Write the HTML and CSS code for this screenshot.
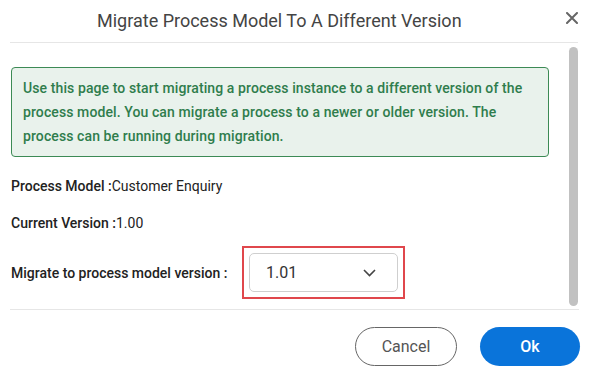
FILE: index.html
```html
<!DOCTYPE html>
<html lang="en">
<head>
  <meta charset="utf-8" />
  <meta name="viewport" content="width=device-width, initial-scale=1.0" />
  <title>Migrate Process Model</title>
  <link rel="stylesheet" href="styles.css">
</head>
<body>
  <div class="dialog">
    <div class="header">
      <h1>Migrate Process Model To A Different Version</h1>
      <span class="close">
        <svg width="12" height="12" viewBox="0 0 12 12"><path d="M1 1 L11 11 M11 1 L1 11" stroke="#666" stroke-width="2" stroke-linecap="round"/></svg>
      </span>
    </div>

    <div class="main">
      <div class="content">
        <div class="notice">
          Use this page to start migrating a process instance to a different version of the<br>
          process model. You can migrate a process to a newer or older version. The<br>
          process can be running during migration.
        </div>

        <div class="field first"><b>Process Model :</b>Customer Enquiry</div>
        <div class="field"><b>Current Version :</b>1.00</div>

        <div class="migrate-row">
          <b>Migrate to process model version :</b>
          <div class="highlight">
            <div class="select">
              <span>1.01</span>
              <svg width="13" height="8" viewBox="0 0 13 8"><path d="M1 1 L6.5 6.5 L12 1" fill="none" stroke="#444" stroke-width="1.6"/></svg>
            </div>
          </div>
        </div>
      </div>
      <div class="scrollbar"></div>
    </div>

    <div class="footer">
      <a href="#" class="btn cancel">Cancel</a>
      <a href="#" class="btn ok">Ok</a>
    </div>
  </div>
</body>
</html>
```

FILE: styles.css
```css
body {
  margin: 0;
  background: #fff;
  font-family: Roboto, 'Liberation Sans', sans-serif;
  color: #222;
}

.dialog {
  width: 591px;
  height: 378px;
}

.header {
  height: 42px;
  margin: 0 13px 0 10px;
  border-bottom: 1px solid #e6e6e6;
  display: flex;
  align-items: center;
}

.header h1 {
  flex: 1;
  margin: 0 0 1px 0;
  padding-left: 87px;
  font-size: 18px;
  font-weight: 400;
  color: #444;
}

.close {
  display: flex;
  margin: 0 0 6px 0;
}

.main {
  display: flex;
  height: 266px;
}

.content {
  width: 538px;
  padding-left: 11px;
}

.notice {
  margin-top: 24px;
  height: 72px;
  padding: 8px 11px;
  border: 1px solid #3c8a55;
  border-radius: 4px;
  background: #e9f2ec;
  color: #2f7d4c;
  font-size: 14px;
  font-weight: 500;
  line-height: 24px;
  letter-spacing: 0.1px;
  white-space: nowrap;
}

.field {
  font-size: 14px;
  line-height: 20px;
  margin-top: 17px;
}

.field.first {
  margin-top: 19px;
}

.field b,
.migrate-row b {
  font-weight: 500;
}

.migrate-row {
  display: flex;
  align-items: center;
  margin-top: 13px;
  font-size: 14px;
}

.migrate-row b {
  width: 231px;
}

.highlight {
  border: 2px solid #e0474c;
  padding: 5px;
}

.select {
  height: 37px;
  border: 1px solid #cfcfcf;
  border-radius: 5px;
  display: flex;
  align-items: center;
  justify-content: space-between;
  padding: 0 21px 0 16px;
  box-sizing: content-box;
  width: 110px;
  font-size: 16px;
  color: #333;
}

.scrollbar {
  width: 9px;
  margin: 4px 0 3px 20px;
  border-radius: 5px;
  background: #c1c1c1;
}

.footer {
  margin: 0 12px 0 10px;
  border-top: 1px solid #e6e6e6;
  padding-top: 17px;
  display: flex;
  justify-content: flex-end;
  gap: 23px;
}

.btn {
  height: 39px;
  border-radius: 20px;
  display: flex;
  align-items: center;
  justify-content: center;
  text-decoration: none;
  font-size: 16px;
  box-sizing: border-box;
}

.cancel {
  width: 102px;
  border: 1px solid #666;
  color: #555;
}

.ok {
  width: 100px;
  margin-right: -1px;
  background: #0a74da;
  color: #fff;
  font-weight: 500;
}
```
